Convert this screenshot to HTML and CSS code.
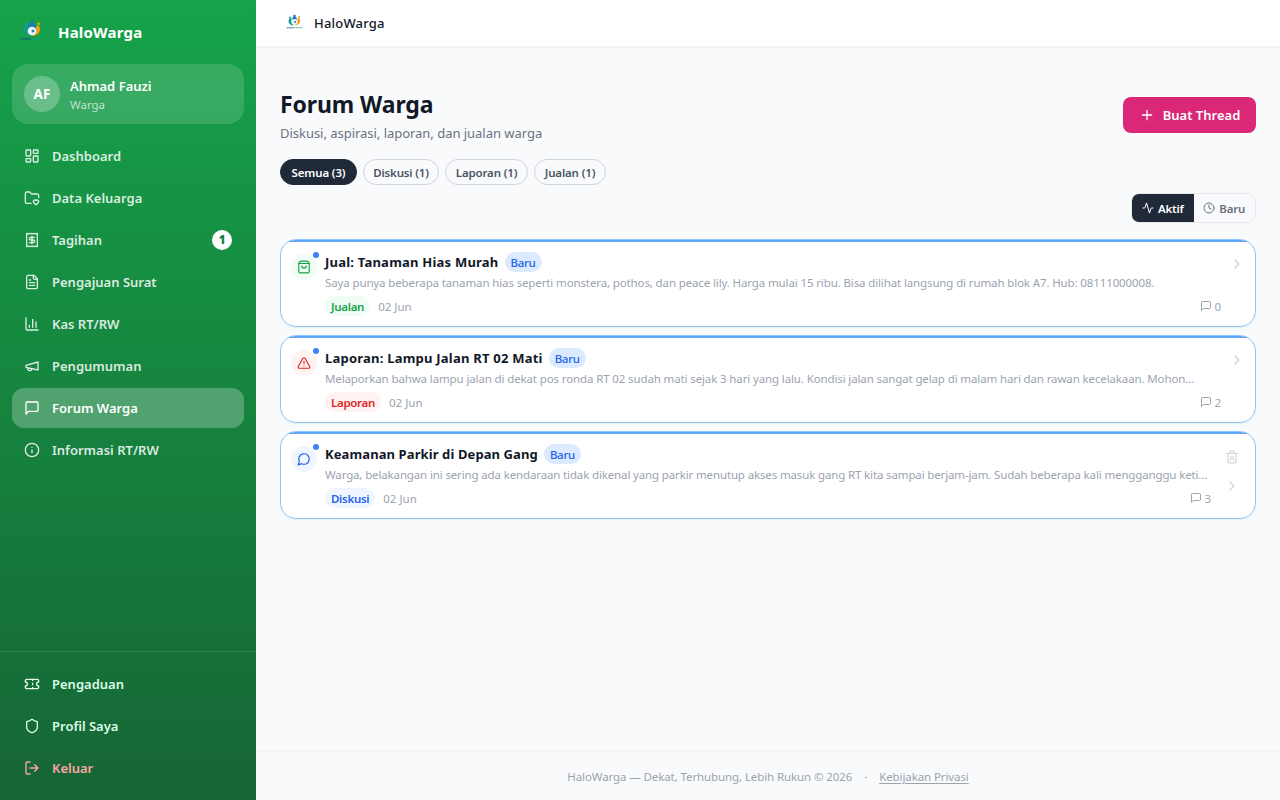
FILE: index.html
```html
<!DOCTYPE html>
<html lang="id">
<head>
    <meta charset="UTF-8">
    <meta name="viewport" content="width=device-width, initial-scale=1.0">
    <title>Forum Warga - HaloWarga</title>
    <link rel="stylesheet" href="styles.css">
</head>
<body>
    <svg class="sprite" aria-hidden="true">
        <symbol id="logo" viewBox="0 0 24 22">
            <path d="M6 5C2 8 3 14 9 16l3-1C8 13 7 10 8 7z" fill="#159a94"/>
            <path d="M18 5c4 4 2 9-4 11l-3-1c4-2 5-4 5-8z" fill="#f59b1b"/>
            <path d="M8 7l2-3h4l2 3-4 1z" fill="#1976c9"/>
            <circle cx="12" cy="2.500" r="1.800" fill="#1976c9"/>
            <circle cx="18.500" cy="3.800" r="1.400" fill="#f59b1b"/>
            <circle cx="5.500" cy="4.500" r="1.300" fill="#159a94"/>
            <circle cx="12" cy="11" r="4.300" fill="#eef7fc"/>
            <circle cx="13" cy="11" r="1.500" fill="#2381bd"/>
            <path d="M1 19h10" stroke="#174e83" stroke-width="2" stroke-opacity="0.6" stroke-dasharray="2 .5"/>
            <path d="M11 19h12" stroke="#159a84" stroke-width="1.800" stroke-opacity="0.6" stroke-dasharray="2 .5"/>
        </symbol>
        <symbol id="dashboard" viewBox="0 0 24 24"><rect x="3" y="3" width="7" height="9" rx="1"/><rect x="14" y="3" width="7" height="5" rx="1"/><rect x="14" y="12" width="7" height="9" rx="1"/><rect x="3" y="16" width="7" height="5" rx="1"/></symbol>
        <symbol id="folder" viewBox="0 0 24 24"><path d="M10.638 20H4a2 2 0 0 1-2-2V5a2 2 0 0 1 2-2h3.900a2 2 0 0 1 1.690.900l.810 1.200a2 2 0 0 0 1.670.900H20a2 2 0 0 1 2 2v3.417"/><path d="M14.620 18.800A2.250 2.250 0 1 1 18 15.836a2.250 2.250 0 1 1 3.380 2.966l-2.626 2.856a.998.998 0 0 1-1.507 0z"/></symbol>
        <symbol id="receipt" viewBox="0 0 24 24"><path d="M4 2v20l2-1 2 1 2-1 2 1 2-1 2 1 2-1 2 1V2l-2 1-2-1-2 1-2-1-2 1-2-1-2 1Z"/><path d="M16 8h-6a2 2 0 1 0 0 4h4a2 2 0 1 1 0 4H8"/><path d="M12 17.500v-11"/></symbol>
        <symbol id="file" viewBox="0 0 24 24"><path d="M15 2H6a2 2 0 0 0-2 2v16a2 2 0 0 0 2 2h12a2 2 0 0 0 2-2V7Z"/><path d="M14 2v4a2 2 0 0 0 2 2h4M10 9H8M16 13H8M16 17H8"/></symbol>
        <symbol id="chart" viewBox="0 0 24 24"><path d="M3 3v16a2 2 0 0 0 2 2h16M18 17V9M13 17V5M8 17v-3"/></symbol>
        <symbol id="megaphone" viewBox="0 0 24 24"><path d="m3 11 18-5v12L3 14v-3z"/><path d="M11.600 16.800a3 3 0 1 1-5.800-1.600"/></symbol>
        <symbol id="message" viewBox="0 0 24 24"><path d="M21 15a2 2 0 0 1-2 2H7l-4 4V5a2 2 0 0 1 2-2h14a2 2 0 0 1 2 2z"/></symbol>
        <symbol id="info" viewBox="0 0 24 24"><circle cx="12" cy="12" r="10"/><path d="M12 16v-4M12 8h.010"/></symbol>
        <symbol id="ticket" viewBox="0 0 24 24"><path d="M2 9a3 3 0 0 1 0 6v2a2 2 0 0 0 2 2h16a2 2 0 0 0 2-2v-2a3 3 0 0 1 0-6V7a2 2 0 0 0-2-2H4a2 2 0 0 0-2 2Z"/><path d="M13 5v2M13 17v2M13 11v2"/></symbol>
        <symbol id="shield" viewBox="0 0 24 24"><path d="M20 13c0 5-3.500 7.500-7.660 8.950a1 1 0 0 1-.670-.010C7.500 20.500 4 18 4 13V6a1 1 0 0 1 1-1c2 0 4.500-1.200 6.240-2.720a1.170 1.170 0 0 1 1.520 0C14.510 3.810 17 5 19 5a1 1 0 0 1 1 1z"/></symbol>
        <symbol id="logout" viewBox="0 0 24 24"><path d="M9 21H5a2 2 0 0 1-2-2V5a2 2 0 0 1 2-2h4M16 17l5-5-5-5M21 12H9"/></symbol>
        <symbol id="plus" viewBox="0 0 24 24"><path d="M5 12h14M12 5v14"/></symbol>
        <symbol id="activity" viewBox="0 0 24 24"><path d="M22 12h-2.480a2 2 0 0 0-1.930 1.460l-2.350 8.360a.25.25 0 0 1-.480 0L9.240 2.180a.25.25 0 0 0-.480 0l-2.350 8.360A2 2 0 0 1 4.490 12H2"/></symbol>
        <symbol id="clock" viewBox="0 0 24 24"><circle cx="12" cy="12" r="10"/><path d="M12 6v6l4 2"/></symbol>
        <symbol id="bag" viewBox="0 0 24 24"><path d="M16 10a4 4 0 0 1-8 0M3.103 6.034h17.794"/><path d="M3.400 5.467a2 2 0 0 0-.400 1.200V20a2 2 0 0 0 2 2h14a2 2 0 0 0 2-2V6.667a2 2 0 0 0-.400-1.200l-2-2.667A2 2 0 0 0 17 2H7a2 2 0 0 0-1.600.800z"/></symbol>
        <symbol id="alert" viewBox="0 0 24 24"><path d="m21.730 18-8-14a2 2 0 0 0-3.480 0l-8 14A2 2 0 0 0 4 21h16a2 2 0 0 0 1.730-3M12 9v4M12 17h.010"/></symbol>
        <symbol id="bubble" viewBox="0 0 24 24"><path d="M7.900 20A9 9 0 1 0 4 16.100L2 22Z"/></symbol>
        <symbol id="chevron" viewBox="0 0 24 24"><path d="m9 18 6-6-6-6"/></symbol>
        <symbol id="trash" viewBox="0 0 24 24"><path d="M3 6h18M19 6v14a2 2 0 0 1-2 2H7a2 2 0 0 1-2-2V6M8 6V4a2 2 0 0 1 2-2h4a2 2 0 0 1 2 2v2M10 11v6M14 11v6"/></symbol>
    </svg>

    <aside class="sidebar">
        <div class="brand">
            <svg class="brand-logo"><use href="#logo"/></svg>
            <span class="brand-name">HaloWarga</span>
        </div>

        <div class="user-card">
            <div class="avatar">AF</div>
            <div>
                <div class="user-name">Ahmad Fauzi</div>
                <div class="user-role">Warga</div>
            </div>
        </div>

        <nav class="nav">
            <a class="nav-item"><svg class="icon"><use href="#dashboard"/></svg><span>Dashboard</span></a>
            <a class="nav-item"><svg class="icon"><use href="#folder"/></svg><span>Data Keluarga</span></a>
            <a class="nav-item"><svg class="icon"><use href="#receipt"/></svg><span>Tagihan</span><b class="count">1</b></a>
            <a class="nav-item"><svg class="icon"><use href="#file"/></svg><span>Pengajuan Surat</span></a>
            <a class="nav-item"><svg class="icon"><use href="#chart"/></svg><span>Kas RT/RW</span></a>
            <a class="nav-item"><svg class="icon"><use href="#megaphone"/></svg><span>Pengumuman</span></a>
            <a class="nav-item active"><svg class="icon"><use href="#message"/></svg><span>Forum Warga</span></a>
            <a class="nav-item"><svg class="icon"><use href="#info"/></svg><span>Informasi RT/RW</span></a>
        </nav>

        <div class="nav nav-bottom">
            <a class="nav-item"><svg class="icon"><use href="#ticket"/></svg><span>Pengaduan</span></a>
            <a class="nav-item"><svg class="icon"><use href="#shield"/></svg><span>Profil Saya</span></a>
            <a class="nav-item logout"><svg class="icon"><use href="#logout"/></svg><span>Keluar</span></a>
        </div>
    </aside>

    <div class="page">
        <header class="topbar">
            <svg class="topbar-logo"><use href="#logo"/></svg>
            <span>HaloWarga</span>
        </header>

        <main class="content">
            <div class="heading">
                <div>
                    <h1>Forum Warga</h1>
                    <p>Diskusi, aspirasi, laporan, dan jualan warga</p>
                </div>
                <button class="new-btn"><svg class="icon"><use href="#plus"/></svg>Buat Thread</button>
            </div>

            <div class="filters">
                <button class="chip selected">Semua (3)</button>
                <button class="chip">Diskusi (1)</button>
                <button class="chip chip-wide">Laporan (1)</button>
                <button class="chip chip-narrow">Jualan (1)</button>
            </div>

            <div class="sort">
                <button class="sort-btn selected"><svg class="icon"><use href="#activity"/></svg>Aktif</button>
                <button class="sort-btn"><svg class="icon"><use href="#clock"/></svg>Baru</button>
            </div>

            <div class="threads">
                <article class="thread">
                    <div class="thread-icon green"><svg class="icon"><use href="#bag"/></svg><i class="dot"></i></div>
                    <div class="thread-body">
                        <div class="thread-title"><h2>Jual: Tanaman Hias Murah</h2><span class="new-tag">Baru</span></div>
                        <p class="excerpt">Saya punya beberapa tanaman hias seperti monstera, pothos, dan peace lily. Harga mulai 15 ribu. Bisa dilihat langsung di rumah blok A7. Hub: 08111000008.</p>
                        <div class="meta"><span class="tag green">Jualan</span><span>02 Jun</span><span class="replies"><svg class="icon"><use href="#message"/></svg>0</span></div>
                    </div>
                    <div class="thread-side"><svg class="icon"><use href="#chevron"/></svg></div>
                </article>

                <article class="thread">
                    <div class="thread-icon red"><svg class="icon"><use href="#alert"/></svg><i class="dot"></i></div>
                    <div class="thread-body">
                        <div class="thread-title"><h2>Laporan: Lampu Jalan RT 02 Mati</h2><span class="new-tag">Baru</span></div>
                        <p class="excerpt">Melaporkan bahwa lampu jalan di dekat pos ronda RT 02 sudah mati sejak 3 hari yang lalu. Kondisi jalan sangat gelap di malam hari dan rawan kecelakaan. Mohon...</p>
                        <div class="meta"><span class="tag red">Laporan</span><span>02 Jun</span><span class="replies"><svg class="icon"><use href="#message"/></svg>2</span></div>
                    </div>
                    <div class="thread-side"><svg class="icon"><use href="#chevron"/></svg></div>
                </article>

                <article class="thread own">
                    <div class="thread-icon blue"><svg class="icon"><use href="#bubble"/></svg><i class="dot"></i></div>
                    <div class="thread-body">
                        <div class="thread-title"><h2>Keamanan Parkir di Depan Gang</h2><span class="new-tag">Baru</span></div>
                        <p class="excerpt">Warga, belakangan ini sering ada kendaraan tidak dikenal yang parkir menutup akses masuk gang RT kita sampai berjam-jam. Sudah beberapa kali mengganggu keti...</p>
                        <div class="meta"><span class="tag blue">Diskusi</span><span>02 Jun</span><span class="replies"><svg class="icon"><use href="#message"/></svg>3</span></div>
                    </div>
                    <div class="thread-side"><svg class="icon trash"><use href="#trash"/></svg><svg class="icon"><use href="#chevron"/></svg></div>
                </article>
            </div>
        </main>

        <footer class="footer">
            <span>HaloWarga — Dekat, Terhubung, Lebih Rukun © 2026</span>
            <span class="sep">·</span>
            <a>Kebijakan Privasi</a>
        </footer>
    </div>
</body>
</html>
```
FILE: styles.css
```css
* {
    box-sizing: border-box;
}

body {
    margin: 0;
    display: flex;
    height: 100vh;
    overflow: hidden;
    background: #f9fafb;
    font-family: "Noto Sans", sans-serif;
    color: #111827;
}

h1, h2, p {
    margin: 0;
}

button {
    font-family: inherit;
    cursor: pointer;
    margin: 0;
    white-space: nowrap;
}

.sprite {
    position: absolute;
    width: 0;
    height: 0;
}

.icon {
    width: 16px;
    height: 16px;
    flex: none;
    fill: none;
    stroke: currentColor;
    stroke-width: 2;
    stroke-linecap: round;
    stroke-linejoin: round;
}

/* Sidebar */
.sidebar {
    width: 256px;
    flex: none;
    display: flex;
    flex-direction: column;
    background: linear-gradient(180deg, #16a34a, #166534);
    color: #fff;
}

.brand {
    height: 64px;
    display: flex;
    align-items: center;
    gap: 14px;
    padding-left: 20px;
}

.brand-logo {
    width: 24px;
    height: 22px;
    margin-top: -3px;
}

.brand-name {
    font-size: 15px;
    font-weight: 700;
    letter-spacing: 0.2px;
}

.user-card {
    height: 60px;
    margin: 0 12px 12px;
    padding: 0 12px;
    display: flex;
    align-items: center;
    gap: 10px;
    border-radius: 16px;
    background: rgba(255, 255, 255, 0.15);
}

.avatar {
    width: 36px;
    height: 36px;
    border-radius: 50%;
    display: flex;
    align-items: center;
    justify-content: center;
    background: rgba(255, 255, 255, 0.25);
    font-size: 13.5px;
    font-weight: 700;
}

.user-name {
    font-size: 13px;
    line-height: 20px;
    font-weight: 600;
}

.user-role {
    padding-top: 1px;
    font-size: 11.5px;
    line-height: 16px;
    color: rgba(255, 255, 255, 0.7);
}

.nav {
    display: flex;
    flex-direction: column;
    gap: 2px;
    padding: 0 12px;
}

.nav-item {
    height: 40px;
    padding: 0 12px;
    display: flex;
    align-items: center;
    gap: 12px;
    border-radius: 12px;
    font-size: 13px;
    font-weight: 600;
    color: rgba(255, 255, 255, 0.85);
}

.nav-item.active {
    background: rgba(255, 255, 255, 0.25);
    color: #fff;
}

.count {
    width: 20px;
    height: 20px;
    margin-left: auto;
    border-radius: 50%;
    background: #fff;
    color: #15803d;
    font-size: 11.5px;
    line-height: 20px;
    text-align: center;
}

.nav-bottom {
    margin-top: auto;
    padding: 12px;
    border-top: 1px solid rgba(255, 255, 255, 0.12);
}

.nav-bottom .nav-item {
    color: #dcfce7;
}

.nav-bottom .logout {
    color: #fca5a5;
}

/* Main column */
.page {
    flex: 1;
    min-width: 0;
    display: flex;
    flex-direction: column;
}

.topbar {
    height: 47px;
    padding-left: 30px;
    display: flex;
    align-items: center;
    gap: 11px;
    background: #fff;
    border-bottom: 1px solid #f3f4f6;
    box-shadow: 0 1px 2px rgba(0, 0, 0, 0.05);
    font-size: 13px;
    font-weight: 500;
    letter-spacing: 0.2px;
}

.topbar-logo {
    width: 17px;
    height: 16px;
    margin-top: -3px;
}

.content {
    flex: 1;
    padding: 41px 24px 0;
}

.heading {
    height: 54px;
    display: flex;
    align-items: center;
    justify-content: space-between;
}

.heading h1 {
    font-size: 23px;
    line-height: 32px;
    font-weight: 700;
    letter-spacing: -0.1px;
}

.heading p {
    margin-top: 3px;
    font-size: 13px;
    line-height: 20px;
    letter-spacing: -0.03px;
    color: #6b7280;
}

.new-btn {
    width: 133px;
    height: 36px;
    padding: 0;
    display: flex;
    align-items: center;
    justify-content: center;
    gap: 8px;
    border: 0;
    border-radius: 8px;
    background: #db2777;
    color: #fff;
    font-size: 13px;
    font-weight: 600;
}

.filters {
    display: flex;
    gap: 6px;
    margin-top: 17px;
}

.chip {
    width: 76px;
    height: 26px;
    padding: 1px 0 0;
    border: 1px solid #d1d5db;
    border-radius: 13px;
    background: #f9fafb;
    color: #4b5563;
    font-size: 11.5px;
    font-weight: 600;
    letter-spacing: -0.15px;
}

.chip.selected {
    width: 77px;
    border-color: #1f2937;
    background: #1f2937;
    color: #fff;
}

.chip-wide {
    width: 83px;
}

.chip-narrow {
    width: 72px;
}

.sort {
    width: 125px;
    height: 30px;
    margin: 8px 0 16px auto;
    display: flex;
    overflow: hidden;
    border: 1px solid #e5e7eb;
    border-radius: 8px;
}

.sort-btn {
    flex: 1;
    padding: 0;
    display: flex;
    align-items: center;
    justify-content: center;
    gap: 4px;
    border: 0;
    background: #f9fafb;
    color: #6b7280;
    font-size: 11.5px;
    font-weight: 600;
    letter-spacing: -0.2px;
}

.sort-btn.selected {
    background: #1f2937;
    color: #fff;
}

.sort-btn .icon {
    width: 12px;
    height: 12px;
}

/* Thread list */
.threads {
    display: flex;
    flex-direction: column;
    gap: 8px;
}

.thread {
    height: 88px;
    padding: 10px 10px 0;
    display: flex;
    overflow: hidden;
    border: 1px solid #93c5fd;
    border-radius: 16px;
    background: linear-gradient(#60a5fa, #60a5fa) 0 0 / 100% 2px no-repeat #fff;
    box-shadow: 0 1px 2px rgba(0, 0, 0, 0.06);
}

.thread-icon {
    position: relative;
    width: 26px;
    height: 26px;
    margin: 4px 8px 0 0;
    display: flex;
    align-items: center;
    justify-content: center;
    border-radius: 50%;
}

.thread-icon .icon {
    width: 14px;
    height: 14px;
}

.dot {
    position: absolute;
    top: -2px;
    right: -2px;
    width: 6px;
    height: 6px;
    border-radius: 50%;
    background: #3b82f6;
}

.green {
    background: #f0fdf4;
    color: #16a34a;
}

.red {
    background: #fef2f2;
    color: #dc2626;
}

.blue {
    background: #eff6ff;
    color: #2563eb;
}

.thread-body {
    flex: 1;
    min-width: 0;
    padding-top: 1px;
}

.thread-title {
    height: 22px;
    display: flex;
    align-items: center;
    gap: 6px;
}

.thread-title h2 {
    font-size: 13px;
    font-weight: 700;
    letter-spacing: 0.22px;
}

.new-tag, .tag {
    height: 20px;
    padding: 0 6px;
    border-radius: 10px;
    font-size: 11.5px;
    line-height: 21px;
    font-weight: 500;
    letter-spacing: -0.3px;
}

.tag {
    font-weight: 600;
}

.new-tag {
    background: #dbeafe;
    color: #2563eb;
}

.excerpt {
    height: 20px;
    font-size: 11.5px;
    line-height: 20px;
    letter-spacing: -0.125px;
    white-space: nowrap;
    color: #9ca3af;
}

.meta {
    height: 20px;
    margin-top: 3px;
    display: flex;
    align-items: center;
    gap: 8px;
    font-size: 11.5px;
    letter-spacing: 0;
    color: #9ca3af;
}

.replies {
    margin-left: auto;
    display: flex;
    align-items: center;
    gap: 2px;
}

.replies .icon {
    width: 12px;
    height: 12px;
}

.thread-side {
    width: 24px;
    padding: 6px 0 0 8px;
    display: flex;
    flex-direction: column;
    color: #d1d5db;
}

/* Threads the user can delete */
.own h2 {
    letter-spacing: 0.1px;
}

.own .excerpt {
    letter-spacing: -0.14px;
}

.own .thread-side {
    width: 34px;
    padding: 8px 0 0 13px;
    gap: 14px;
}

.own .trash {
    width: 14px;
    height: 14px;
    margin-left: 1px;
}

/* Footer */
.footer {
    height: 49px;
    padding-top: 1px;
    display: flex;
    align-items: center;
    justify-content: center;
    border-top: 1px solid #f3f4f6;
    font-size: 11.5px;
    letter-spacing: -0.1px;
    color: #9ca3af;
}

.footer .sep {
    margin: 0 12px;
}

.footer a {
    text-decoration: underline;
    text-underline-offset: 2px;
}
```
